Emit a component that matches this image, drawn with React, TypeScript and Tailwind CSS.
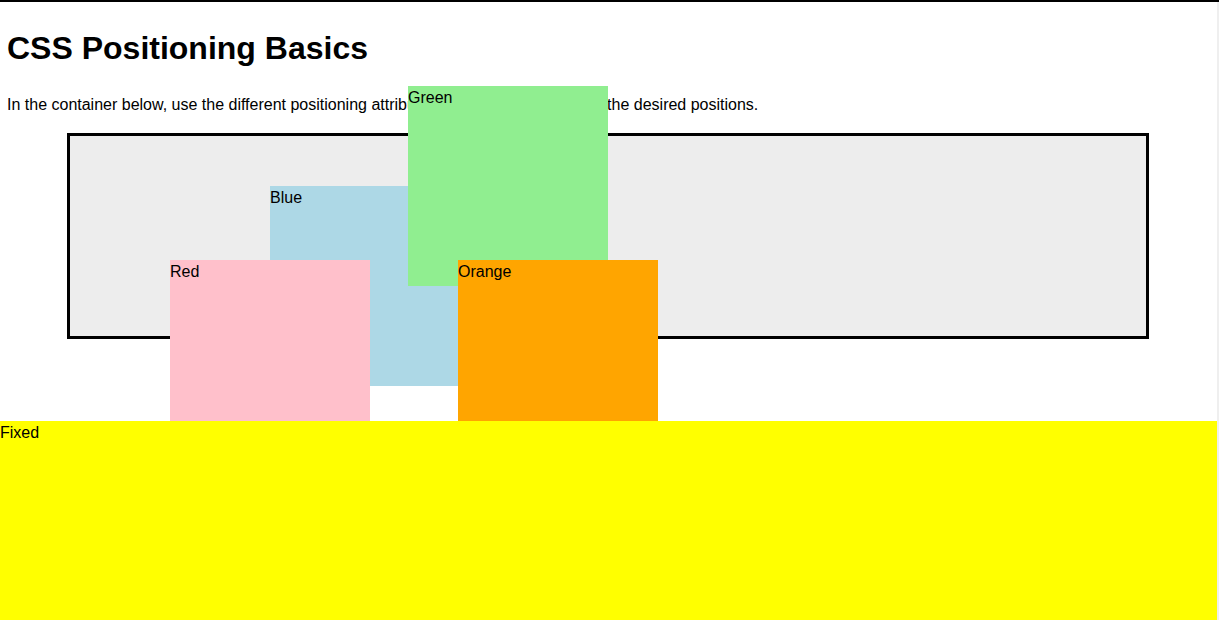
const boxes = [
  { label: "Blue", className: "left-[270px] top-[184px] bg-[#add8e6]" },
  { label: "Green", className: "left-[408px] top-[84px] bg-[#90ee90]" },
  { label: "Red", className: "left-[170px] top-[258px] bg-[#ffc0cb]" },
  { label: "Orange", className: "left-[458px] top-[258px] bg-[#ffa500]" },
];

export default function App() {
  return (
    <div
      className="relative h-[620px] w-full overflow-hidden border-t-2 border-black bg-white text-black"
      style={{ fontFamily: '"Liberation Sans", Arial, sans-serif' }}
    >
      <div className="flex h-full">
        <main className="flex w-[1217px] flex-col px-[7px] pt-[28px]">
          <h1 className="text-[32px] font-bold leading-[37px]">CSS Positioning Basics</h1>
          <p className="mt-[29px] text-base leading-[18px]">
            In the container below, use the different positioning attributes to move the boxes into the desired positions.
          </p>
          {/* container */}
          <div className="ml-[60px] mt-[19px] h-[206px] w-[1082px] border-[3px] border-black bg-[#ededed]" />
        </main>
        <div className="w-[2px] bg-[#efefef]" />
      </div>

      {boxes.map((box) => (
        <div
          key={box.label}
          className={`absolute h-[200px] w-[200px] text-base leading-[23px] ${box.className}`}
        >
          {box.label}
        </div>
      ))}

      <div className="fixed bottom-0 left-0 h-[199px] w-[1217px] bg-[#ffff00] text-base leading-[23px]">
        Fixed
      </div>
    </div>
  );
}
